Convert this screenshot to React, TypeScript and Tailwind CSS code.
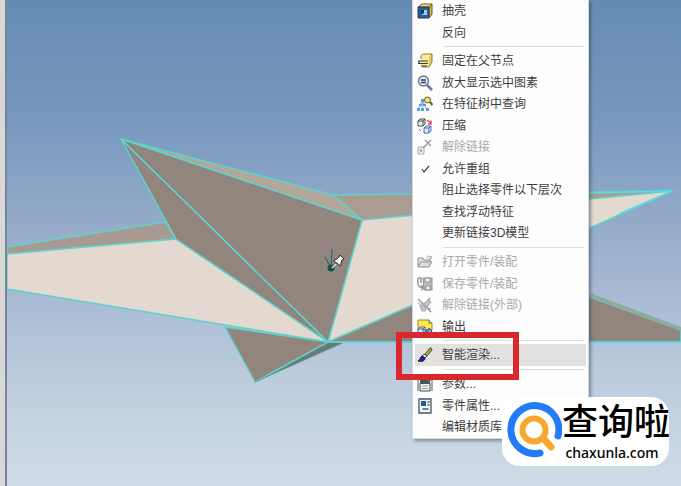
import type { ReactNode } from "react";

type Item = { label: string; icon?: ReactNode; disabled?: boolean; active?: boolean; checked?: boolean };

function Icon({ children }: { children: ReactNode }) {
  return (
    <svg viewBox="0 0 16 16" className="h-4 w-4" fill="none" aria-hidden="true">
      {children}
    </svg>
  );
}

const shell = (
  <Icon>
    <path d="M1 4 5 1h10l-3 3z" fill="#f4e36a" stroke="#6a6230" />
    <path d="m12 4 3-3v10l-3 4z" fill="#d8c23c" stroke="#5a5228" />
    <path d="M1 4h11v11H1z" fill="#2c5c9c" stroke="#263a56" />
    <path d="M4 7h6v5H4z" fill="#8fd0ec" />
    <path d="M4 7h3v3l-3 2z" fill="#173762" />
  </Icon>
);
const pinned = (
  <Icon>
    <path d="M4 4c0-2 1-3 3-3h8v8l-3 5H4z" fill="#faeb9a" />
    <path d="M12 4v10l3-5V1z" fill="#e2cd62" />
    <path d="M4 6V4c0-2 1-3 3-3h8v8l-3 5H5" stroke="#8a7a3c" />
    <path d="M11 8H1m0 2.500h10M2 8v2.500M4 13h6" stroke="#3d3c34" strokeWidth="1.2" />
  </Icon>
);
const magnify = (
  <Icon>
    <circle cx="6.5" cy="6" r="5" fill="#e6eef8" stroke="#66738c" strokeWidth="1.4" />
    <path d="M4 5h5M4 7.500h5" stroke="#273b66" strokeWidth="1.3" />
    <path d="m10 10 5 5" stroke="#5f7ba8" strokeWidth="2.5" />
  </Icon>
);
const treeSearch = (
  <Icon>
    <path d="m5.500 4-4 9m4-9v9m0-9 4 9M3 9h5" stroke="#8dbbe2" strokeWidth="1.2" />
    <path d="M4 3h3v3H4zM2 8h3v2H2zM6 8h3v2H6zM0 12h3v3H0zM4 12h3v3H4zM9 12h3v3H9z" fill="#5b9bd5" />
    <circle cx="10.500" cy="4" r="3" fill="#f4e767" stroke="#5b552d" />
    <path d="m13 6 2.500 3" stroke="#6b5b2b" strokeWidth="2" />
  </Icon>
);
const compress = (
  <Icon>
    <path d="M1 3h5v5H1zM1 3l2-2h5L6 3m2-2v5L6 8" fill="#eef1ee" stroke="#474d49" />
    <path d="m10 2 4 3m0-2.500V6h-3" stroke="#c94b50" strokeWidth="1.3" />
    <path d="M7 10h5v5H7zM7 10l2-2h5l-2 2m2-2v5l-2 2" fill="#dce9ff" stroke="#4d6da9" />
    <path d="m2 11 2 2" stroke="#c94b50" />
  </Icon>
);
const unlink = (
  <Icon>
    <path d="M1 8h6v7H1z" fill="#eee" stroke="#aaa" />
    <path d="M3 10h2v3H3z" fill="#aaa" />
    <path d="m8 1 6 6m0-6L8 7l-2 2" stroke="#999" strokeWidth="1.4" />
  </Icon>
);
const folder = (
  <Icon>
    <path d="M1 13V4h5l1 2h6v2M1 13l3-5h11l-3 5z" fill="#ddd" stroke="#929292" />
    <path d="M9 4c2-3 4-2 5 0m0-2v3h-3" stroke="#999" />
  </Icon>
);
const save = (
  <Icon>
    <path d="M6 2h9v12H7z" fill="#bbb" stroke="#929292" />
    <path d="M8 2h5v4H8zM9 10h4v4H9z" fill="#f1f1f1" stroke="#929292" />
    <path d="M1 2v5c0 4 2 4 5 5M4 9l3 3-3 2M1 2h3v5" stroke="#999" strokeWidth="1.5" />
  </Icon>
);
const unlinkExternal = (
  <Icon>
    <path d="M1 2 14 15M13 1 9 6" stroke="#999" strokeWidth="1.5" />
    <path d="m6 7 6-4 2 2-4 5zM3 9l3-1 3 3-1 3H5z" fill="#c5c5c5" stroke="#a5a5a5" />
    <path d="m1 6 4 3m5 2 4 1" stroke="#999" />
  </Icon>
);
const output = (
  <Icon>
    <path d="M1 1h11l3 3v7H1z" fill="#ffe94b" stroke="#9a8428" />
    <path d="M12 1v3h3" fill="#fff" stroke="#6d613a" />
    <path d="M1 10h5v5H1zM1 10l2-2h5l-2 2m2-2v5l-2 2" fill="#d9e9ff" stroke="#3e66ad" />
    <path d="M9 11h3V9l3 3-3 3v-2H9z" fill="#88b9f0" stroke="#234886" />
  </Icon>
);
const brush = (
  <Icon>
    <path d="m8 7 5-6c1-.5 2 .5 2 2l-5 6z" fill="#b1a44d" stroke="#4d4b30" />
    <path d="m7 7 3 2-2 2-3-2z" fill="#e8e8d7" stroke="#454b61" />
    <path d="M5 9c-2 1-1 3-4 5 4 1 7 0 7-3z" fill="#26238d" stroke="#171746" />
  </Icon>
);
const params = (
  <Icon>
    <path d="M1 4v11M15 4v11" stroke="#555c60" />
    <path d="M3 7h10v8H3z" fill="#f5f5f2" stroke="#454b4d" />
    <path d="M3 4h10v4H3z" fill="#44565f" />
    <path d="M5 10h6M5 12.500h6" stroke="#999" />
    <path d="M11 3h3v2h-3z" fill="#ca5950" />
  </Icon>
);
const properties = (
  <Icon>
    <path d="M2 1h12v14H2z" fill="#f2f6fa" stroke="#45566a" strokeWidth="1.3" />
    <path d="M4 3h5v5H4z" fill="#2f5688" />
    <path d="M10.500 4h2m-2 3h2m-7 4h6" stroke="#45566a" strokeWidth="1.3" />
  </Icon>
);
const check = (
  <Icon>
    <path d="m5 8 2 3 5-6" stroke="#454545" strokeWidth="1.3" />
  </Icon>
);

const groups: Item[][] = [
  [{ label: "抽壳", icon: shell }, { label: "反向" }],
  [
    { label: "固定在父节点", icon: pinned },
    { label: "放大显示选中图素", icon: magnify },
    { label: "在特征树中查询", icon: treeSearch },
    { label: "压缩", icon: compress },
    { label: "解除链接", icon: unlink, disabled: true },
    { label: "允许重组", icon: check, checked: true },
    { label: "阻止选择零件以下层次" },
    { label: "查找浮动特征" },
    { label: "更新链接3D模型" },
  ],
  [
    { label: "打开零件/装配", icon: folder, disabled: true },
    { label: "保存零件/装配", icon: save, disabled: true },
    { label: "解除链接(外部)", icon: unlinkExternal, disabled: true },
    { label: "输出", icon: output },
  ],
  [{ label: "智能渲染...", icon: brush, active: true }],
  [{ label: "参数...", icon: params }, { label: "零件属性...", icon: properties }, { label: "编辑材质库" }],
];

function ContextMenu() {
  return (
    <nav
      aria-label="零件"
      className="absolute left-[412px] top-0 w-[177px] border-x border-b border-[#d5d8dc] bg-[#fdfdfd] shadow-[2px_2px_3px_rgba(40,50,65,0.45)]"
    >
      {groups.map((group, g) => (
        <div key={g}>
          {g > 0 && (
            <div className="flex h-[7px] items-center pl-[30px] pr-1">
              <hr className="w-full border-0 border-t border-[#dedede]" />
            </div>
          )}
          <ul>
            {group.map((item) => (
              <li key={item.label} className="h-[22px] px-[2px] even:h-[21px]">
                <button
                  type="button"
                  disabled={item.disabled}
                  aria-pressed={item.checked}
                  className={`flex h-full w-full items-center whitespace-nowrap text-left text-xs ${
                    item.active ? "bg-[#e2e1df]" : ""
                  } ${item.disabled ? "text-[#a9a9a9]" : "text-[#3d3d3d]"}`}
                >
                  <span className="flex w-[27px] shrink-0 pl-[2px]">{item.icon}</span>
                  <span>{item.label}</span>
                </button>
              </li>
            ))}
          </ul>
        </div>
      ))}
    </nav>
  );
}

function Model() {
  return (
    <svg
      viewBox="0 0 681 486"
      preserveAspectRatio="xMinYMin slice"
      className="absolute inset-0 h-full w-full"
      role="img"
      aria-label="三维零件"
    >
      <g stroke="#5fd3ca" strokeWidth="1.5" strokeLinejoin="round">
        <path d="M7 247 165 222l11 17L7 254z" fill="#a89a92" />
        <path d="M7 254 176 239 328 342 7 289z" fill="#e3d9d1" />
        <path d="m333 195 339-4-150 21-160 8z" fill="#aa9b93" />
        <path d="m362 220 228-21 82-8-82 37-262 114z" fill="#e3d9d1" />
        <path d="m328 342 142-62 120 17 91 33v12z" fill="#91857d" />
        <path d="M590 297v-4l91 34v4z" fill="#8dab9f" stroke="none" />
        <path d="m121 139 212 56 29 25z" fill="#b3a69b" />
        <path d="M121 139 362 220 328 342 176 239z" fill="#91857d" />
        <path d="m121 139 207 203" stroke="#55dce0" />
        <path d="m328 342-73 40 88-39z" fill="#6f7775" stroke="none" />
        <path d="m225 327 103 15-73 40z" fill="#91857d" />
        <path d="m255 382 87-39" stroke="#579b96" strokeWidth="1" />
        <path d="M328 342h353" stroke="#4ed9df" />
        <path d="m619 214 53-23-82 2" fill="none" stroke="#52e0e2" />
      </g>
      <path d="m332 249-1 19m-6-11 6 11 9-9" fill="none" stroke="#286b68" strokeWidth="1.2" />
      <circle cx="331" cy="268" r="3.500" fill="#184e4c" />
      <path d="m332 268 4-4" stroke="#dae3e0" strokeWidth="1.5" />
      <path d="m334 260 3-1 2-2 1-2 4 4-2 1-1 3v3l-3-2-4-3z" fill="#f4f2ef" stroke="#29302f" />
    </svg>
  );
}

function Watermark() {
  return (
    <aside className="absolute left-[502px] top-[397px] flex h-[69px] w-[167px] items-start rounded-[18px] bg-white pl-1 pt-[5px] text-black">
      <svg viewBox="0 0 56 56" className="h-14 w-14 shrink-0" fill="none" aria-hidden="true">
        <path d="M34 51A24 24 0 1 1 52 34" stroke="#237bfa" strokeWidth="7" strokeLinecap="round" />
        <circle cx="28" cy="28" r="11.500" stroke="#f6a82c" strokeWidth="6" />
        <path d="m37 36 8 9" stroke="#f6a82c" strokeWidth="7" strokeLinecap="round" />
      </svg>
      <div className="flex flex-col items-center">
        <strong className="whitespace-nowrap text-[36px] font-medium leading-[42px]">查询啦</strong>
        <span className="pr-2 font-['Noto_Sans',sans-serif] text-sm font-medium leading-[18px]">chaxunla.com</span>
      </div>
    </aside>
  );
}

export default function App() {
  return (
    <main className="relative flex min-h-screen overflow-hidden bg-[linear-gradient(#658bb5_0%,#7899bf_25%,#94abc9_46%,#aabdd6_63%,#bdccdd_78%,#d0dbe7_100%)] font-['Liberation_Sans','Noto_Sans_CJK_SC',sans-serif]">
      <Model />
      <div className="relative w-[7px] shrink-0 border-r-2 border-[#7b8493] bg-[#d8d8d8]" />
      <ContextMenu />
      <div className="pointer-events-none absolute left-[396px] top-[332px] h-[48px] w-[123px] border-[6px] border-[#d9272e]" />
      <Watermark />
    </main>
  );
}
